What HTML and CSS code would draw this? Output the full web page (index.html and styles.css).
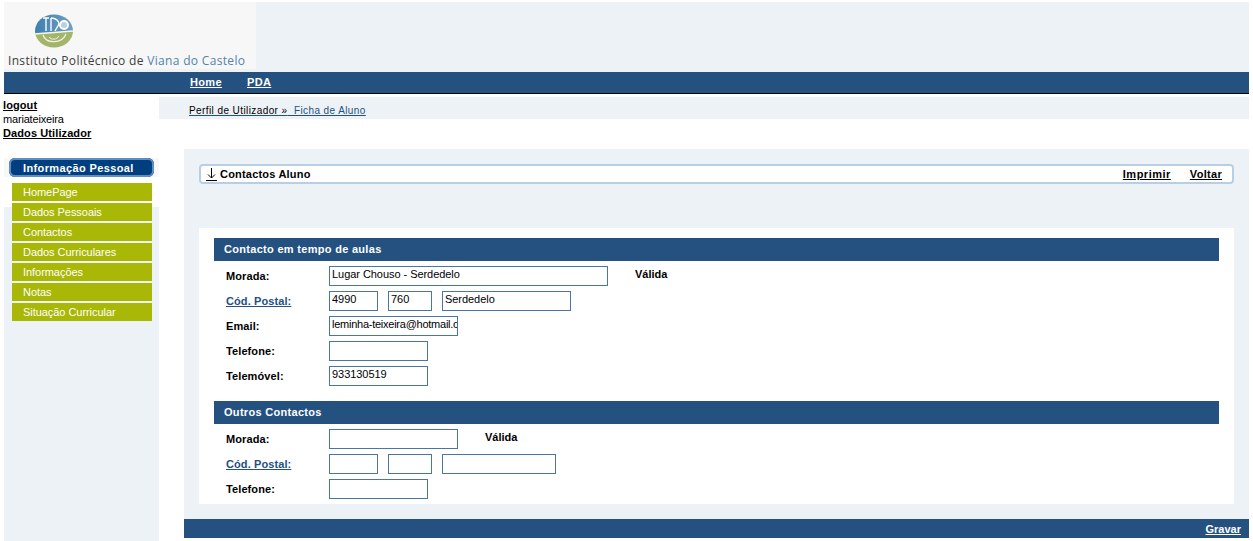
FILE: index.html
```html
<!DOCTYPE html>
<html lang="pt">
<head>
<meta charset="utf-8">
<title>Contactos Aluno</title>
<link rel="stylesheet" href="styles.css">
</head>
<body>
<div class="page">
  <header class="masthead">
    <div class="logo">
      <svg class="logo-mark" width="38" height="34" viewBox="0 0 38 34" aria-hidden="true">
        <defs>
          <linearGradient id="sky" x1="0" y1="0" x2="1" y2="0"><stop offset="0" stop-color="#3f7fb0"/><stop offset="1" stop-color="#6fa0c4"/></linearGradient>
          <clipPath id="oval"><ellipse cx="19" cy="17" rx="19" ry="16.5"/></clipPath>
        </defs>
        <g clip-path="url(#oval)">
          <rect width="38" height="19" fill="url(#sky)"/>
          <path d="M0 19 L38 17 V34 H0 Z" fill="#a3b56a"/>
          <path d="M0 20 L38 17" stroke="#f4f6f2" stroke-width="1.4" fill="none"/>
          <path d="M8 21 C11 30 27 30 31 20" stroke="#eef2e2" stroke-width="1.3" fill="none"/>
          <path d="M14 23 C16 26 22 26 24 22" stroke="#eef2e2" stroke-width="1" fill="none"/>
          <path d="M11 4 V17 M8 4 H14 M16 4 V17 M16 4 C21 4 24 7 24 10 L20 17" stroke="#fff" stroke-width="1.4" fill="none"/>
          <circle cx="29" cy="11" r="4" stroke="#fff" stroke-width="2" fill="#b9d0e0"/>
        </g>
      </svg>
      <div class="logo-name">Instituto Politécnico de <span class="logo-accent">Viana do Castelo</span></div>
    </div>
  </header>

  <nav class="navbar">
    <a href="#">Home</a>
    <a href="#">PDA</a>
  </nav>

  <div class="layout">
    <aside class="sidebar">
      <div class="user">
        <a class="user-link" href="#">logout</a>
        <div class="user-name">mariateixeira</div>
        <a class="user-link user-data" href="#">Dados Utilizador</a>
      </div>
      <div class="menu-strip"><div class="menu-title">Informação Pessoal</div></div>
      <ul class="menu">
        <li>HomePage</li>
        <li>Dados Pessoais</li>
        <li>Contactos</li>
        <li>Dados Curriculares</li>
        <li>Informações</li>
        <li>Notas</li>
        <li>Situação Curricular</li>
      </ul>
    </aside>

    <main class="main">
      <div class="crumbs"><a href="#"><span class="crumb-first">Perfil de Utilizador&nbsp;»</span>&nbsp;&nbsp;Ficha de Aluno</a></div>
      <div class="content">
        <div class="toolbar">
          <svg class="toolbar-icon" width="11" height="13" viewBox="0 0 11 13" aria-hidden="true">
            <path d="M5.5 0 V10 M2 6.5 L5.5 10 L9 6.5 M0 12.5 H11" stroke="#000" stroke-width="1" fill="none"/>
          </svg>
          <span class="toolbar-title">Contactos Aluno</span>
          <a class="toolbar-link" href="#">Imprimir</a>
          <a class="toolbar-link toolbar-last" href="#">Voltar</a>
        </div>

        <section class="panel">
          <h2 class="section-head">Contacto em tempo de aulas</h2>
          <div class="row">
            <span class="label">Morada:</span>
            <input class="field w279" value="Lugar Chouso - Serdedelo">
            <span class="status status-far">Válida</span>
          </div>
          <div class="row">
            <a class="label label-link" href="#">Cód. Postal:</a>
            <input class="field w49" value="4990">
            <input class="field w44" value="760">
            <input class="field w129" value="Serdedelo">
          </div>
          <div class="row">
            <span class="label">Email:</span>
            <input class="field w129 field-email" value="leminha-teixeira@hotmail.com">
          </div>
          <div class="row">
            <span class="label">Telefone:</span>
            <input class="field w99" value="">
          </div>
          <div class="row">
            <span class="label">Telemóvel:</span>
            <input class="field w99" value="933130519">
          </div>

          <h2 class="section-head section-second">Outros Contactos</h2>
          <div class="row">
            <span class="label">Morada:</span>
            <input class="field w129" value="">
            <span class="status status-near">Válida</span>
          </div>
          <div class="row">
            <a class="label label-link" href="#">Cód. Postal:</a>
            <input class="field w49" value="">
            <input class="field w44" value="">
            <input class="field w114" value="">
          </div>
          <div class="row">
            <span class="label">Telefone:</span>
            <input class="field w99" value="">
          </div>
        </section>
      </div>
      <div class="footer-bar"><a href="#">Gravar</a></div>
    </main>
  </div>
</div>
</body>
</html>
```

FILE: styles.css
```css
* { box-sizing: border-box; }

html, body { margin: 0; height: 100%; background: #fff; overflow: hidden; }

body {
  font-family: "Liberation Sans", Arial, sans-serif;
  font-size: 11px;
  color: #000;
}

.page {
  display: flex;
  flex-direction: column;
  height: 541px;
  padding: 2px 4px 0;
}

.masthead {
  flex: none;
  height: 70px;
  background: #edf2f7;
}

.logo {
  width: 252px;
  height: 67px;
  background: #f7f7f7;
  padding: 12px 0 0 4px;
  display: flex;
  flex-direction: column;
}

.logo-mark { margin-left: 27px; flex: none; }

.logo-name {
  margin-top: 5px;
  font-family: "Open Sans", sans-serif;
  font-size: 12px;
  line-height: 16px;
  letter-spacing: 0.33px;
  white-space: nowrap;
  color: #3c3c3c;
}

.logo-accent { color: #4f85ae; }

.navbar {
  flex: none;
  height: 22px;
  background: #24517f;
  border-bottom: 1px solid #000;
  padding: 0 0 2px 186px;
  display: flex;
  align-items: center;
  gap: 25px;
}

.navbar a {
  color: #fff;
  font-weight: bold;
  font-size: 11px;
  letter-spacing: 0.35px;
}

.layout {
  flex: 1;
  display: flex;
  min-height: 0;
}

.sidebar {
  flex: none;
  width: 155px;
  background: linear-gradient(#fff 113px, #edf2f7 113px);
}

.user {
  height: 64px;
  padding-top: 4px;
  margin-left: -1px;
  line-height: 14px;
}

.user-link {
  display: block;
  color: #000;
  font-weight: bold;
  letter-spacing: 0.1px;
}

.user-name { letter-spacing: -0.18px; }
.user-data { margin-top: 0; }

.menu-strip {
  height: 19px;
  background: #f7f7f7;
  padding: 0 5px;
}

.menu-title {
  height: 19px;
  line-height: 20px;
  border-radius: 6px;
  background: #003f7f;
  box-shadow: inset 0 0 0 2px #5f8fbd;
  color: #fff;
  font-weight: bold;
  font-size: 11px;
  letter-spacing: 0.38px;
  padding-left: 14px;
}

.menu {
  list-style: none;
  margin: 6px 0 0 8px;
  padding: 0;
  width: 140px;
  display: flex;
  flex-direction: column;
  gap: 2px;
}

.menu li {
  height: 18px;
  line-height: 18px;
  background: #a9b706;
  color: #fff;
  padding-left: 11px;
  letter-spacing: -0.05px;
}

.main {
  flex: 1;
  min-width: 0;
  padding-top: 3px;
  display: flex;
  flex-direction: column;
}

.crumbs {
  flex: none;
  height: 22px;
  background: #edf2f7;
  padding: 7px 0 0 30px;
  font-size: 10px;
  line-height: 13px;
  letter-spacing: 0.41px;
}

.crumbs a { color: #24517f; }
.crumb-first { color: #000; }

.content {
  flex: none;
  margin: 30px 0 0 25px;
  height: 370px;
  padding: 15px;
  background: #edf2f7;
}

.toolbar {
  height: 20px;
  display: flex;
  align-items: center;
  background: #fff;
  border: 2px solid #b8cfe3;
  border-radius: 4px;
  padding: 0 10px 0 5px;
}

.toolbar-icon { flex: none; margin-right: 3px; margin-top: 1px; }

.toolbar-title {
  font-weight: bold;
  letter-spacing: 0.2px;
  margin-right: auto;
}

.toolbar-link {
  color: #000;
  font-weight: bold;
  letter-spacing: 0.5px;
  margin-left: 19px;
}

.toolbar-last { letter-spacing: 0.3px; }

.panel {
  margin-top: 44px;
  height: 276px;
  background: #fff;
  padding: 10px 15px 0;
}

.section-head {
  margin: 0 0 5px;
  height: 23px;
  line-height: 23px;
  padding-left: 10px;
  background: #24517f;
  color: #fff;
  font-size: 11px;
  font-weight: bold;
  letter-spacing: 0.3px;
}

.section-second { margin-top: 15px; }

.row {
  height: 20px;
  margin-bottom: 5px;
  display: flex;
  align-items: center;
  padding-left: 12px;
  gap: 10px;
}

.label {
  width: 93px;
  flex: none;
  font-weight: bold;
  letter-spacing: 0.1px;
  color: #000;
}

.label-link { color: #24517f; }

.field {
  height: 20px;
  flex: none;
  border: 1px solid #4a76a3;
  background: #fff;
  padding: 0 2px 4px;
  margin: 0;
  border-radius: 0;
  outline: 0;
  font-family: "Liberation Sans", Arial, sans-serif;
  font-size: 11px;
  letter-spacing: -0.05px;
  color: #000;
}

.field-email {
  padding-right: 0;
  letter-spacing: -0.25px;
}

.w279 { width: 279px; }
.w129 { width: 129px; }
.w114 { width: 114px; }
.w99 { width: 99px; }
.w49 { width: 49px; }
.w44 { width: 44px; }

.status {
  font-weight: bold;
  letter-spacing: 0;
  margin-bottom: 4px;
}

.status-far { margin-left: 17px; }
.status-near { margin-left: 17px; }

.footer-bar {
  flex: none;
  margin-left: 25px;
  height: 19px;
  padding-right: 8px;
  background: #24517f;
  display: flex;
  align-items: center;
  justify-content: flex-end;
}

.footer-bar a {
  color: #fff;
  font-weight: bold;
  letter-spacing: 0;
}
```
